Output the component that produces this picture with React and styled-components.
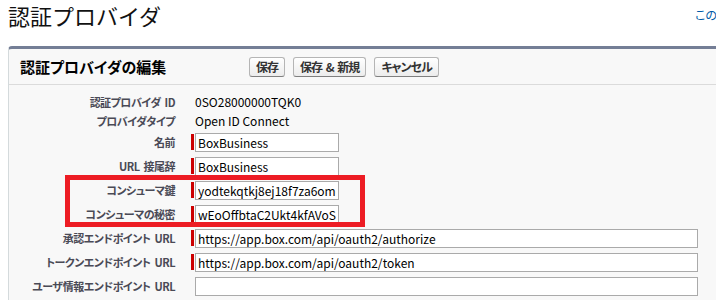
import React from "react";
import styled, { createGlobalStyle } from "styled-components";

const GlobalStyle = createGlobalStyle`
  html, body {
    margin: 0;
    padding: 0;
    background: #fff;
    overflow: hidden;
  }
  body {
    font-family: "Noto Sans CJK JP", "Liberation Sans", sans-serif;
    font-feature-settings: "palt";
    color: #000;
  }
`;

const Page = styled.div`
  position: relative;
  width: 740px;
  padding-left: 8px;
`;

const TitleBar = styled.div`
  display: flex;
  align-items: flex-start;
  height: 46px;
`;

const PageTitle = styled.h1`
  flex: 0 0 687px;
  margin: -1px 0 0;
  font-size: 22px;
  line-height: 32px;
  font-weight: normal;
  font-feature-settings: normal;
  color: #111;
`;

const HelpLink = styled.a`
  font-size: 12px;
  line-height: 30px;
  color: #015ba7;
  text-decoration: none;
  white-space: nowrap;
`;

const Panel = styled.section`
  background: #f8f8f8;
  border-top: 3px solid #747e96;
  border-left: 1px solid #d4dadc;
  border-radius: 4px 0 0 0;
  padding-bottom: 10px;
`;

const PanelHeader = styled.div`
  display: flex;
  align-items: center;
  height: 35px;
  padding-left: 11px;
  border-bottom: 1px solid #dbdbdb;
`;

const PanelTitle = styled.h2`
  flex: 0 0 229px;
  margin: 0;
  font-size: 15px;
  font-weight: bold;
  color: #000;
`;

const Buttons = styled.div`
  display: flex;
  gap: 8px;
`;

const Button = styled.button`
  height: 20px;
  padding: 0 6px;
  border: 1px solid #b5b5b5;
  border-bottom-color: #7f7f7f;
  border-radius: 3px;
  background: linear-gradient(#ffffff, #ececec);
  font-family: inherit;
  font-feature-settings: "palt";
  font-size: 12px;
  font-weight: bold;
  letter-spacing: -1px;
  word-spacing: 2px;
  line-height: 18px;
  color: #333;
`;

const Fields = styled.div`
  padding-top: 7px;
`;

const Row = styled.div`
  display: grid;
  grid-template-columns: 166px auto;
  column-gap: 16px;
  align-items: center;
  height: ${p => (p.$input ? 24 : 19)}px;
`;

const Label = styled.div`
  text-align: right;
  font-size: 11px;
  font-weight: bold;
  letter-spacing: -0.5px;
  word-spacing: 2px;
  color: #4a4a56;
  white-space: nowrap;
`;

const Value = styled.div`
  display: flex;
  align-items: center;
  padding-left: ${p => (p.$pad ? 4 : 0)}px;
  font-size: 12px;
  color: #000;
  white-space: nowrap;
`;

const RequiredBar = styled.span`
  width: 3px;
  height: 16px;
  margin-right: 1px;
  background: ${p => (p.$on ? "#c00" : "transparent")};
`;

const TextInput = styled.input`
  box-sizing: border-box;
  width: ${p => p.$width}px;
  height: 19px;
  margin: 0;
  padding: 0 2px;
  border: 1px solid #aaa;
  background: #fff;
  font-family: inherit;
  font-feature-settings: "palt";
  font-size: 12px;
  color: #000;
  outline: none;
`;

const Highlight = styled.div`
  position: absolute;
  left: 65px;
  top: 175px;
  width: 300px;
  height: 52px;
  box-sizing: border-box;
  border: 5px solid #ed1c24;
  pointer-events: none;
`;

const fields = [
  { label: "認証プロバイダ ID", text: "0SO28000000TQK0" },
  { label: "プロバイダタイプ", text: "Open ID Connect" },
  { label: "名前", input: "BoxBusiness", required: true, width: 144 },
  { label: "URL 接尾辞", input: "BoxBusiness", required: true, width: 144 },
  { label: "コンシューマ鍵", input: "yodtekqtkj8ej18f7za6omdqk5vx", required: true, width: 144 },
  { label: "コンシューマの秘密", input: "wEoOffbtaC2Ukt4kfAVoSd", required: true, width: 144 },
  { label: "承認エンドポイント URL", input: "https://app.box.com/api/oauth2/authorize", required: true, width: 503 },
  { label: "トークンエンドポイント URL", input: "https://app.box.com/api/oauth2/token", required: true, width: 503 },
  { label: "ユーザ情報エンドポイント URL", input: "", required: false, width: 503 },
];

export default function App() {
  return (
    <Page>
      <GlobalStyle />
      <TitleBar>
        <PageTitle>認証プロバイダ</PageTitle>
        <HelpLink href="#">このページのヘルプ</HelpLink>
      </TitleBar>
      <Panel>
        <PanelHeader>
          <PanelTitle>認証プロバイダの編集</PanelTitle>
          <Buttons>
            <Button>保存</Button>
            <Button>保存 &amp; 新規</Button>
            <Button>キャンセル</Button>
          </Buttons>
        </PanelHeader>
        <Fields>
          {fields.map(f => (
            <Row key={f.label} $input={f.input !== undefined}>
              <Label>{f.label}</Label>
              {f.input !== undefined ? (
                <Value>
                  <RequiredBar $on={f.required} />
                  <TextInput $width={f.width} defaultValue={f.input} readOnly />
                </Value>
              ) : (
                <Value $pad>{f.text}</Value>
              )}
            </Row>
          ))}
        </Fields>
      </Panel>
      <Highlight />
    </Page>
  );
}
